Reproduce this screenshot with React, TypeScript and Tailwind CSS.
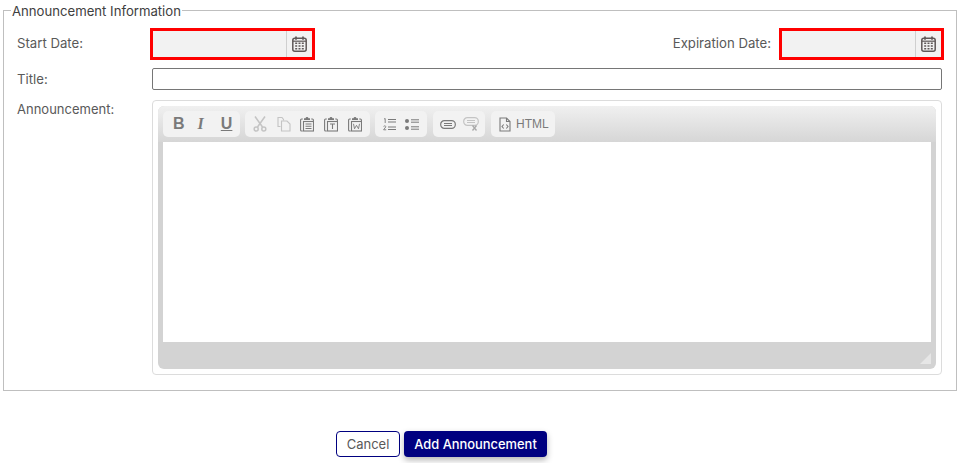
import React from "react";

const Cal = () => (
  <svg width="15" height="16" viewBox="0 0 15 16" fill="none" stroke="#5f5858">
    <rect x="0.8" y="2.3" width="13.4" height="12.9" rx="2" strokeWidth="1.5" />
    <path d="M4 0.5v3.2M11 0.5v3.2" strokeWidth="1.7" />
    <path d="M1 5.2h13" strokeWidth="1.2" />
    <path d="M3.2 7.3h2M6.5 7.3h2M9.8 7.3h2M3.2 10h2M6.5 10h2M9.8 10h2M3.2 12.7h2M6.5 12.7h2M9.8 12.7h2" strokeWidth="1.5" />
  </svg>
);

const DateBox = () => (
  <div className="flex h-[32px] w-[165px] border-[3px] border-[#ff0000] bg-[#f2f2f2]">
    <div className="flex-1" />
    <div className="flex w-[26px] items-center justify-center border-l border-[#cfcfcf]">
      <Cal />
    </div>
  </div>
);

const Group = ({ children, w }: { children: React.ReactNode; w: string }) => (
  <div className={`flex h-[26px] items-center justify-around rounded-[5px] bg-[#f2f2f2] px-[3px] ${w}`}>{children}</div>
);

const C = "#7a7a7a";
const L = "#c4c4c4";

const Board = ({ letter, lines }: { letter?: string; lines?: boolean }) => (
  <svg width="14" height="16" viewBox="0 0 14 16" fill="none" stroke={C} strokeWidth="1.1">
    <path d="M2.8 3H1.6a1 1 0 0 0-1 1v10a1 1 0 0 0 1 1h1.2M11.2 3h1.2a1 1 0 0 1 1 1v1" />
    <path d="M4 4V2.2h1.6a1.4 1.2 0 0 1 2.8 0H10V4z" fill={C} stroke="none" />
    <rect x="3.5" y="5.5" width="10" height="9.5" />
    {lines && <path d="M5.5 8h6M5.5 10.2h6M5.5 12.5h6" />}
    {letter === "T" && <path d="M6 8h5M8.5 8v5" />}
    {letter === "W" && <path d="M5.5 7.8l1 5 2-3.5 2 3.5 1-5" strokeWidth="0.9" />}
  </svg>
);

export default function App() {
  return (
    <div className="h-[463px] w-[964px] overflow-hidden bg-white font-['Inter',sans-serif] text-[13.2px] text-[#595959]">
      <div className="pl-[3px] pr-[7px]">
        <fieldset className="h-[391px] border border-[#bfbfbf] pl-[13px] pr-[14px]">
          <legend className="-ml-[6px] px-[1px] text-[13.15px] leading-[20px] text-[#404040]">
            <span className="inline-block translate-y-px">Announcement Information</span>
          </legend>
          <div className="-mr-[2px] mt-[8px] flex h-[32px] items-center justify-between">
            <div className="flex items-center">
              <label className="w-[133px]">Start Date:</label>
              <DateBox />
            </div>
            <div className="flex items-center gap-[8px]">
              <label>Expiration Date:</label>
              <DateBox />
            </div>
          </div>
          <div className="mt-[8px] flex items-center">
            <label className="w-[135px] pt-[1px]">Title:</label>
            <div className="h-[22px] flex-1 rounded-[2px] border border-[#767676] bg-white" />
          </div>
          <div className="mt-[10px] flex items-start">
            <label className="w-[135px] text-[13px]">Announcement:</label>
            <div className="flex-1 rounded-[4px] border border-[#dcdcdc] p-[5px]">
              <div className="flex h-[263px] flex-col rounded-[6px] bg-[#d3d3d3]">
                <div className="flex h-[36px] items-start gap-[5px] rounded-t-[6px] bg-gradient-to-b from-[#f0f0f0] to-[#d6d6d6] pl-[5px] pt-[5px]">
                  <div className="h-[26px] w-[77px] rounded-[5px] bg-[#f2f2f2]">
                    <div className="flex h-full items-center gap-[13px] pl-[10px]">
                      <span className="font-['Liberation_Sans',sans-serif] text-[16px] font-bold text-[#7a7a7a]">B</span>
                      <span className="font-['Liberation_Serif',serif] text-[16px] font-bold italic text-[#7a7a7a]">I</span>
                      <span className="ml-[4px] font-['Liberation_Sans',sans-serif] text-[16px] font-bold text-[#7a7a7a] underline">U</span>
                    </div>
                  </div>
                  <Group w="w-[125px]">
                    <svg width="14" height="16" viewBox="0 0 14 16" fill="none" stroke={L} strokeWidth="1.5">
                      <path d="M2 0.5l7.5 10.5M12 0.5L4.5 11" />
                      <circle cx="3.2" cy="13" r="2" />
                      <circle cx="10.8" cy="13" r="2" />
                    </svg>
                    <svg width="14" height="16" viewBox="0 0 14 16" fill="none" stroke={L} strokeWidth="1.1">
                      <path d="M3.5 10.5H1V1.5h4l1.5 2v1" />
                      <path d="M4.5 5h5.5l3 3v7H4.5z" fill="#f2f2f2" />
                    </svg>
                    <Board lines />
                    <Board letter="T" />
                    <Board letter="W" />
                  </Group>
                  <Group w="w-[52px]">
                    <svg width="13" height="13" viewBox="0 0 13 13" fill="none" stroke={C}>
                      <path d="M5 1.5h8M5 4h8M5 9h8M5 11.5h8" strokeWidth="1" />
                      <path d="M1 1l1.2-.5v4.5" strokeWidth="0.9" />
                      <path d="M0.6 8.5c.4-1 2.6-.8 2.1.5L0.6 11.8h2.6" strokeWidth="0.9" />
                    </svg>
                    <svg width="14" height="13" viewBox="0 0 14 13" fill="none" stroke={C}>
                      <circle cx="2" cy="3" r="2" fill={C} stroke="none" />
                      <circle cx="2" cy="10" r="2" fill={C} stroke="none" />
                      <path d="M6 1.8h8M6 4.2h8M6 8.8h8M6 11.2h8" strokeWidth="1" />
                    </svg>
                  </Group>
                  <div className="ml-px flex h-[26px] w-[52px] items-center justify-around rounded-[5px] bg-[#f2f2f2] px-[3px]">
                    <svg width="16" height="9" viewBox="0 0 16 9" fill="none" stroke={C} strokeWidth="1.2">
                      <rect x="0.7" y="0.7" width="14.6" height="7.6" rx="3.6" />
                      <path d="M4 3.5h8M4 5.5h8" strokeWidth="1" />
                    </svg>
                    <svg width="16" height="14" viewBox="0 0 16 14" fill="none" stroke={L} strokeWidth="1.2">
                      <rect x="0.7" y="0.7" width="14.6" height="7.6" rx="3.6" />
                      <path d="M4 3.5h8M4 5.5h8" strokeWidth="1" />
                      <path d="M9.5 8.5l4 5M13.5 8.5l-4 5" stroke="#a8a8a8" strokeWidth="1.3" />
                    </svg>
                  </div>
                  <div className="ml-px flex h-[26px] w-[64px] items-center gap-[5px] rounded-[5px] bg-[#f2f2f2] pl-[8px]">
                    <svg width="12" height="15" viewBox="0 0 12 15" fill="none" stroke={C} strokeWidth="1.1">
                      <path d="M1 1h6.5L11 4.5V14H1z" />
                      <path d="M7.5 1v3.5H11" />
                      <path d="M4.7 7.5L3 9.5l1.7 2M7.3 7.5L9 9.5l-1.7 2" />
                    </svg>
                    <span className="font-['Liberation_Sans',sans-serif] text-[12px] text-[#7a7a7a]">HTML</span>
                  </div>
                </div>
                <div className="mx-[5px] h-[200px] bg-white" />
                <div className="relative flex-1">
                  <svg className="absolute bottom-[5px] right-[5px]" width="11" height="11" viewBox="0 0 11 11">
                    <path d="M11 0v11H0z" fill="#e6e6e6" />
                  </svg>
                </div>
              </div>
            </div>
          </div>
        </fieldset>
      </div>
      <div className="mt-[40px] flex gap-[4px] pl-[336px]">
        <button className="h-[26px] w-[64px] rounded-[4px] border border-[#000080] bg-white pt-px text-[13px] text-[#595959]">Cancel</button>
        <button className="h-[26px] w-[143px] rounded-[4px] bg-[#000080] pt-px text-[12.9px] font-medium text-white shadow-[0_3px_6px_rgba(0,0,0,0.3)]">Add Announcement</button>
      </div>
    </div>
  );
}
